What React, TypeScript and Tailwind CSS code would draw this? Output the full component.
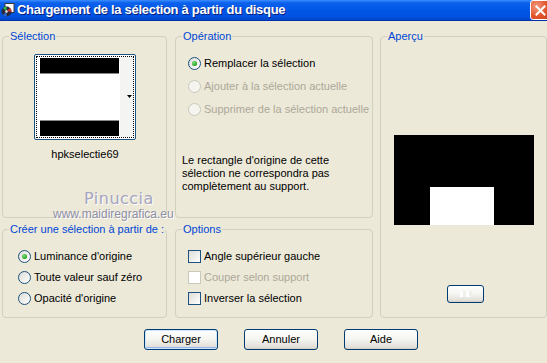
import React from "react";

const ui = "font-['Liberation_Sans',Arial,sans-serif]";

function Group({ title, className, children }: { title: string; className?: string; children?: React.ReactNode }) {
  return (
    <div className={`relative rounded-[4px] border border-[#D0D0BF] ${className ?? ""}`}>
      <span className="absolute -top-[8px] left-[6px] bg-[#ECE9D8] px-[1px] leading-[14px] text-[#0046D5]">{title}</span>
      {children}
    </div>
  );
}

function Radio({ label, checked, disabled }: { label: string; checked?: boolean; disabled?: boolean }) {
  return (
    <div className="flex h-[13px] items-center gap-[3px]">
      <span
        className={`flex h-[13px] w-[13px] shrink-0 items-center justify-center rounded-full border ${
          disabled
            ? "border-[#CAC8BB] bg-[#F5F4EE]"
            : "border-[#1C5180] bg-linear-to-br from-[#DCDCD7] to-white"
        }`}
      >
        {checked && <span className="h-[5px] w-[5px] rounded-full bg-[radial-gradient(circle_at_35%_35%,#7BE07B,#21A121_70%)]" />}
      </span>
      <span className={`leading-[13px] ${disabled ? "text-[#ACA899]" : "text-black"}`}>{label}</span>
    </div>
  );
}

function Check({ label, disabled }: { label: string; disabled?: boolean }) {
  return (
    <div className="flex h-[13px] items-center gap-[3px]">
      <span
        className={`h-[13px] w-[13px] shrink-0 border ${
          disabled ? "border-[#CAC8BB] bg-white" : "border-[#1C5180] bg-linear-to-br from-[#DCDCD7] to-white"
        }`}
      />
      <span className={`leading-[13px] ${disabled ? "text-[#ACA899]" : "text-black"}`}>{label}</span>
    </div>
  );
}

function Button({ children, def, className }: { children?: React.ReactNode; def?: boolean; className?: string }) {
  return (
    <div
      className={`flex items-center justify-center rounded-[3px] border border-[#003C74] bg-linear-to-b from-white via-[#F4F4F0] to-[#DCDAD2] ${
        def ? "shadow-[inset_0_0_0_1px_#CEE7FF,inset_0_-1px_0_1px_#98B8EA]" : "shadow-[inset_0_-1px_0_#D6D0C5]"
      } ${className ?? ""}`}
    >
      {children}
    </div>
  );
}

function TitleIcon() {
  return (
    <svg width="14" height="14" viewBox="0 0 14 14" className="shrink-0">
      <rect x="4" y="0.5" width="9" height="9" fill="#fff" stroke="#3a3a3a" strokeWidth="1" />
      <circle cx="5.5" cy="8.5" r="5" fill="#2a2a3a" />
      <path d="M5.5 8.5 L2 5 A5 5 0 0 1 5.5 3.5 Z" fill="#2fb84a" />
      <path d="M5.5 8.5 L9 5 A5 5 0 0 1 10.5 8.5 Z" fill="#d8342a" />
      <path d="M5.5 8.5 L2 12 A5 5 0 0 0 5.5 13.5 Z" fill="#2a6ad8" />
      <circle cx="5.5" cy="8.5" r="1.2" fill="#e8e8e8" />
    </svg>
  );
}

export default function App() {
  return (
    <div className={`relative h-[363px] w-[547px] overflow-hidden bg-[#ECE9D8] text-[11px] text-black ${ui}`}>
      {/* title bar */}
      <div className="flex h-[21px] items-center overflow-hidden border-b border-[#0031A8] bg-[linear-gradient(to_bottom,#3B8CFF_0%,#0C61EC_14%,#0056E6_50%,#0052DF_85%,#0045C8_100%)] pl-[1px]">
        <TitleIcon />
        <span className="ml-[2px] text-[13px] font-bold tracking-[-0.3px] text-white [text-shadow:1px_1px_0_#0A1E7A]">
          Chargement de la sélection à partir du disque
        </span>
        <div className="ml-auto mr-[-4px] flex h-[20px] w-[21px] items-center justify-center rounded-[3px] border border-white bg-[radial-gradient(circle_at_30%_30%,#F19A80,#E2542A_55%,#C8401C)]">
          <svg width="11" height="11" viewBox="0 0 11 11">
            <path d="M1.5 1.5 L9.5 9.5 M9.5 1.5 L1.5 9.5" stroke="#fff" strokeWidth="2" strokeLinecap="square" />
          </svg>
        </div>
      </div>

      {/* groups */}
      <div className="flex pl-[2px] pt-[15px]">
        <div className="flex w-[165px] flex-col gap-[11px]">
          <Group title="Sélection" className="h-[182px]">
            <div className="flex flex-col pl-[31px] pt-[17px]">
              <div className="h-[86px] w-[102px] rounded-[2px] border border-[#1C5180] bg-white p-[1px]">
                <div className="flex h-full border border-dotted border-black">
                  <div className="flex w-[83px] flex-col justify-between py-[1px] pl-[3px]">
                    <div className="h-[16px] w-[79px] border-b border-[#8A8A8A] bg-black" />
                    <div className="h-[16px] w-[79px] border-t border-[#8A8A8A] bg-black" />
                  </div>
                  <div className="flex flex-1 items-center justify-end bg-[#F4F4F2] pr-[1px]">
                    <svg width="5" height="4" viewBox="0 0 5 4">
                      <path d="M0 0 H5 L2.5 3 Z" fill="#000" />
                    </svg>
                  </div>
                </div>
              </div>
              <div className="mt-[8px] w-[102px] text-center leading-[13px]">hpkselectie69</div>
            </div>
          </Group>
          <Group title="Créer une sélection à partir de :" className="h-[89px]">
            <div className="flex flex-col gap-[8px] pl-[15px] pt-[20px]">
              <Radio label="Luminance d'origine" checked />
              <Radio label="Toute valeur sauf zéro" />
              <Radio label="Opacité d'origine" />
            </div>
          </Group>
        </div>

        <div className="ml-[8px] flex w-[198px] flex-col gap-[11px]">
          <Group title="Opération" className="h-[182px]">
            <div className="flex flex-col gap-[10px] pl-[12px] pt-[20px]">
              <Radio label="Remplacer la sélection" checked />
              <Radio label="Ajouter à la sélection actuelle" disabled />
              <Radio label="Supprimer de la sélection actuelle" disabled />
            </div>
            <p className="mt-[38px] pl-[6px] leading-[13px]">
              Le rectangle d'origine de cette
              <br />
              sélection ne correspondra pas
              <br />
              complètement au support.
            </p>
          </Group>
          <Group title="Options" className="h-[89px]">
            <div className="flex flex-col gap-[8px] pl-[12px] pt-[20px]">
              <Check label="Angle supérieur gauche" />
              <Check label="Couper selon support" disabled />
              <Check label="Inverser la sélection" />
            </div>
          </Group>
        </div>

        <div className="ml-[7px] w-[167px]">
          <Group title="Aperçu" className="h-[282px]">
            <div className="flex flex-col pt-[98px]">
              <div className="ml-[13px] flex h-[90px] w-[140px] items-end bg-black">
                <div className="ml-[36px] h-[38px] w-[64px] bg-white" />
              </div>
              <Button className="ml-[66px] mt-[60px] h-[18px] w-[37px]">
                <span className="h-[6px] w-[12px] bg-[repeating-linear-gradient(90deg,#fff_0_3px,#F0F0EA_3px_6px)]" />
              </Button>
            </div>
          </Group>
        </div>
      </div>

      {/* buttons */}
      <div className="mt-[11px] flex gap-[26px] pl-[144px]">
        <Button def className="h-[21px] w-[74px]">Charger</Button>
        <Button className="h-[21px] w-[74px]">Annuler</Button>
        <Button className="h-[21px] w-[74px]">Aide</Button>
      </div>

      {/* watermark */}
      <div className="absolute left-[84px] top-[191px] font-['DejaVu_Sans',sans-serif] text-[16px] leading-[16px] tracking-[0.5px] text-[#A4A4BE] [text-shadow:1px_1px_0_#fff]">
        Pinuccia
      </div>
      <div className="absolute left-[53px] top-[208px] text-[12px] leading-[12px] tracking-[0px] text-[#8E8EA6] [text-shadow:1px_1px_0_#fff]">
        www.maidiregrafica.eu
      </div>
    </div>
  );
}
